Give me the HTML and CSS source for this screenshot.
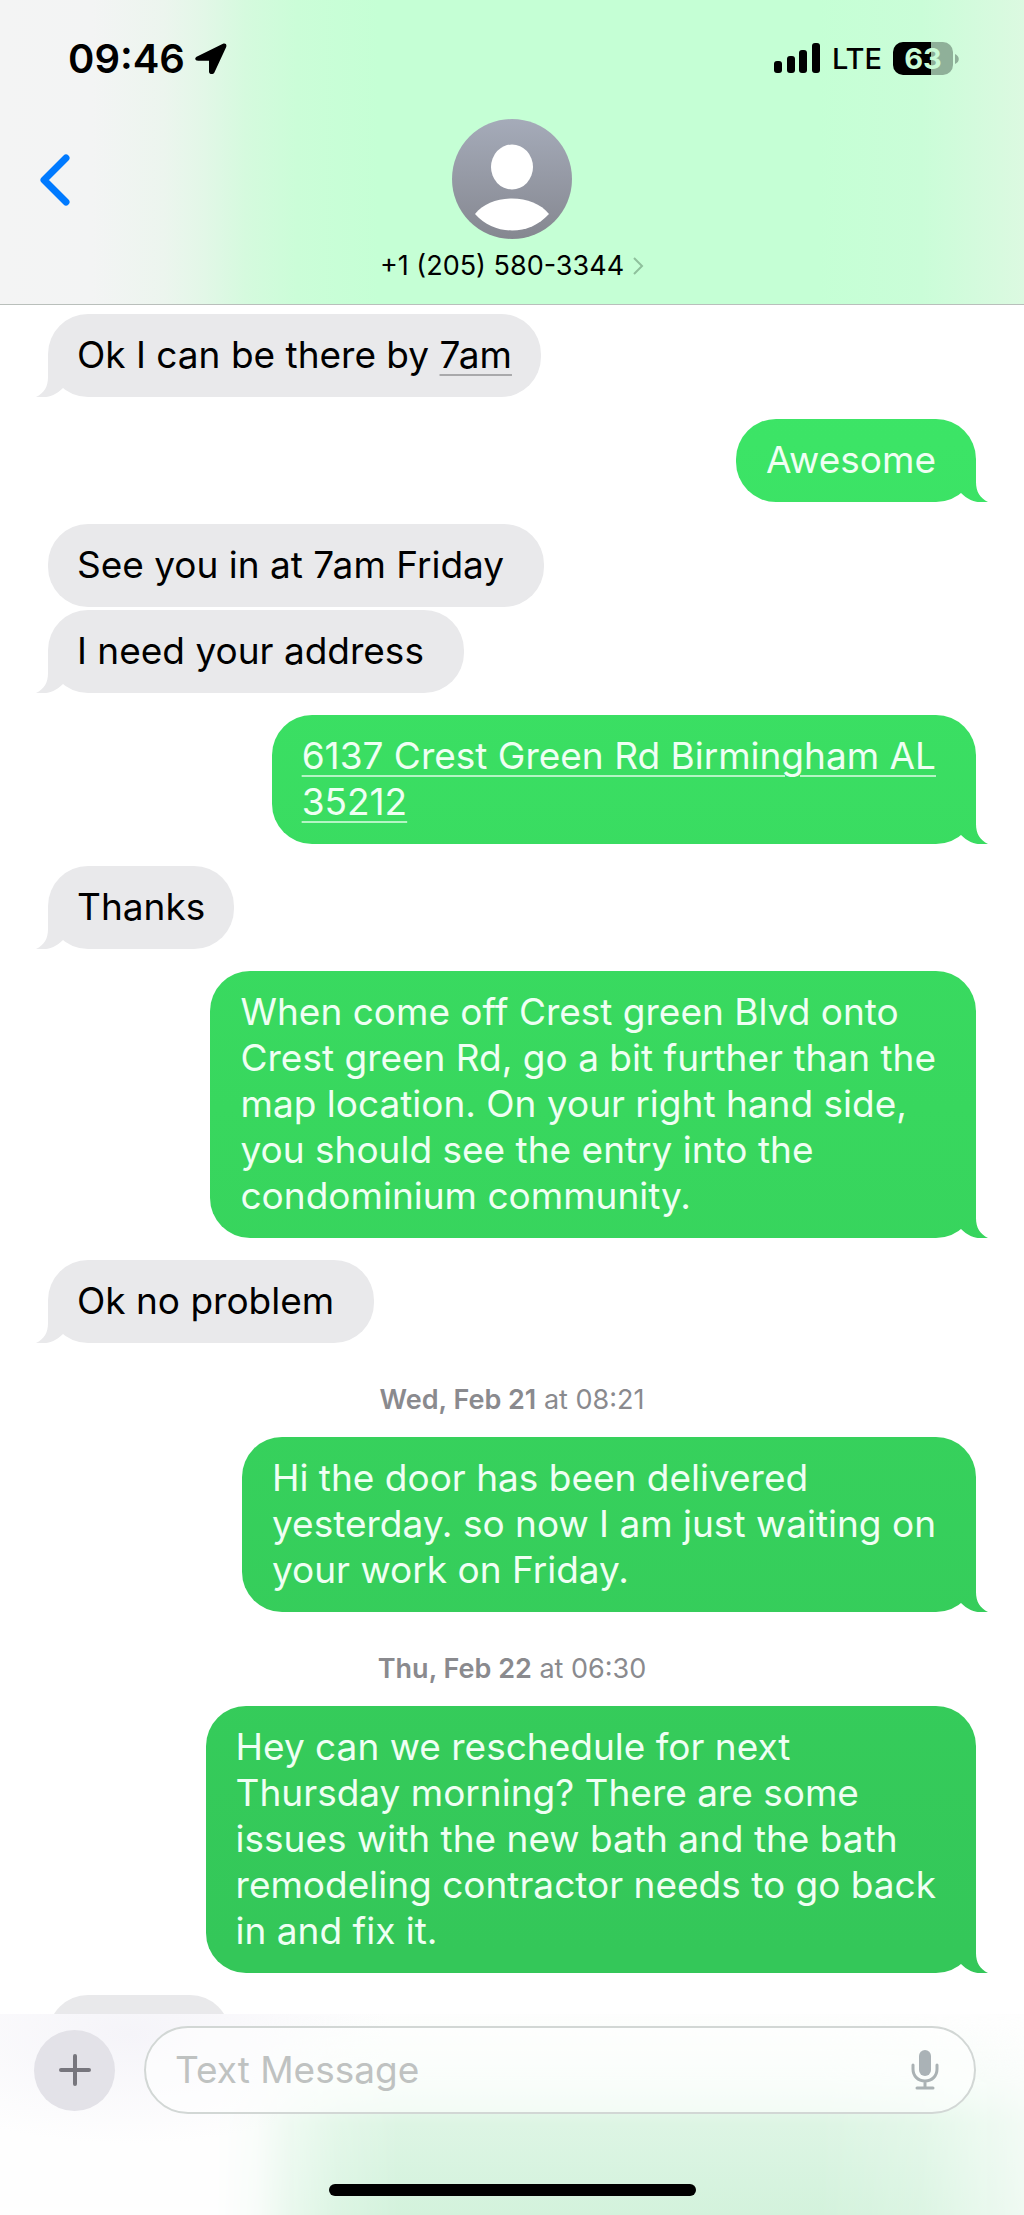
FILE: index.html
```html
<!DOCTYPE html>
<html lang="en">
<head>
<meta charset="utf-8">
<meta name="viewport" content="width=device-width, initial-scale=1">
<title>Messages</title>
<link rel="stylesheet" href="styles.css">
</head>
<body>
<div class="app">
  <header class="header">
    <div class="status">
      <div class="status-left">
        <span class="clock">09:46</span>
        <svg class="icon-location" width="32" height="32" viewBox="0 0 32 32" aria-hidden="true"><path d="M2.6 13.2 28 .8C30.400 0 32 1.500 31.200 4L19.400 29.400C18.200 32 14 31.600 14 28.400V17.800H3.200C-.4 17.600-.8 14.600 2.600 13.200Z"/></svg>
      </div>
      <div class="status-right">
        <svg width="48" height="31" viewBox="0 0 48 31" aria-hidden="true"><rect x="1" y="18" width="8" height="12" rx="3"/><rect x="14" y="13" width="8" height="17" rx="3"/><rect x="26" y="7" width="8" height="23" rx="3"/><rect x="39" y="0" width="8" height="30" rx="3"/></svg>
        <span class="carrier">LTE</span>
        <span class="battery"><span class="battery-level">63</span><svg class="battery-cap" width="4" height="10" viewBox="0 0 4 10" aria-hidden="true"><path d="M0 0C5 2 5 8 0 10Z"/></svg></span>
      </div>
    </div>
    <div class="contact-bar">
      <button class="back" type="button" aria-label="Back">
        <svg width="30" height="52" viewBox="0 0 30 52" aria-hidden="true"><path d="M26 4 4 26 26 48" fill="none" stroke="#007aff" stroke-width="7" stroke-linecap="round" stroke-linejoin="round"/></svg>
      </button>
      <a class="contact" href="#contact">
        <svg width="120" height="120" viewBox="0 0 120 120" aria-hidden="true">
          <defs><linearGradient id="avatar" x1="0" y1="0" x2="0" y2="1"><stop offset="0" stop-color="#a5abb9"/><stop offset="1" stop-color="#858790"/></linearGradient></defs>
          <circle cx="60" cy="60" r="60" fill="url(#avatar)"/>
          <ellipse cx="60" cy="48" rx="21" ry="22.500" fill="#fff"/>
          <path d="M23 95C31 85 45 79.500 60 79.500S89 85 97 95C87 106 74 111.500 60 111.500S33 106 23 95Z" fill="#fff"/>
        </svg>
        <span class="contact-name">+1 (205) 580-3344
          <svg width="12" height="20" viewBox="0 0 12 20" aria-hidden="true"><path d="m2 2 8 8-8 8" fill="none" stroke="#8fc09c" stroke-width="2"/></svg>
        </span>
      </a>
    </div>
  </header>

  <main class="thread">
    <p class="bubble received tail snug">Ok I can be there by <a href="#event">7am</a></p>
    <p class="bubble sent tail">Awesome</p>
    <p class="bubble received">See you in at 7am Friday</p>
    <p class="bubble received tail grouped">I need your address</p>
    <p class="bubble sent tail"><a href="#map">6137 Crest Green Rd Birmingham AL<br>35212</a></p>
    <p class="bubble received tail snug">Thanks</p>
    <p class="bubble sent tail">When come off Crest green Blvd onto<br>Crest green Rd, go a bit further than the<br>map location. On your right hand side,<br>you should see the entry into the<br>condominium community.</p>
    <p class="bubble received tail">Ok no problem</p>
    <p class="stamp"><b>Wed, Feb 21</b> at 08:21</p>
    <p class="bubble sent tail">Hi the door has been delivered<br>yesterday. so now I am just waiting on<br>your work on Friday.</p>
    <p class="stamp"><b>Thu, Feb 22</b> at 06:30</p>
    <p class="bubble sent tail">Hey can we reschedule for next<br>Thursday morning? There are some<br>issues with the new bath and the bath<br>remodeling contractor needs to go back<br>in and fix it.</p>
    <p class="bubble received partial"></p>
  </main>

  <footer class="composer">
    <form class="composer-row">
      <button class="add" type="button" aria-label="Add">
        <svg width="32" height="32" viewBox="0 0 32 32" aria-hidden="true"><path d="M16 2V30M2 16H30" stroke="#77767d" stroke-width="4" stroke-linecap="round"/></svg>
      </button>
      <div class="field">
        <input class="message" type="text" placeholder="Text Message" aria-label="Text Message">
        <button class="mic" type="button" aria-label="Dictate">
          <svg width="28" height="42" viewBox="0 0 28 42" aria-hidden="true"><rect x="8" y="1" width="12" height="26" rx="6" fill="#aab2b6"/><path d="M2 16V20C2 27 7 32 14 32S26 27 26 20V16M14 32V39M6 39H22" fill="none" stroke="#aab2b4" stroke-width="3" stroke-linecap="round"/></svg>
        </button>
      </div>
    </form>
    <div class="home-bar"></div>
  </footer>
</div>
</body>
</html>
```
FILE: styles.css
```css
* {
  box-sizing: border-box;
}

body {
  margin: 0;
  background: #fff;
  color: #000;
  font-family: Inter, "Liberation Sans", sans-serif;
}

button {
  margin: 0;
  padding: 0;
  border: 0;
  background: none;
}

a {
  color: inherit;
}

svg {
  display: block;
  flex: none;
}

.app {
  display: flex;
  flex-direction: column;
  height: 100vh;
}

/* Header */

.header {
  flex: none;
  padding-bottom: 22px;
  border-bottom: 1px solid #b9bfbb;
  background: linear-gradient(90deg, #f4f4f4 0%, #f3f4f4 9%, #ecf5ee 16%, #e2f7e7 20%, #d5fade 24%, #cbfdd8 29%, #c5ffd5 37%, #c5ffd5 80%, #cafdd8 90%, #dcf9e1 100%);
}

.status {
  display: flex;
  justify-content: space-between;
  align-items: center;
  height: 119px;
  padding: 0 65px 2px 68px;
}

.status-left,
.status-right {
  display: flex;
  align-items: center;
}

.status-left {
  gap: 10px;
}

.status-right {
  gap: 11px;
}

.clock {
  font-size: 40px;
  line-height: 48px;
  font-weight: 600;
}

.carrier {
  font-size: 29px;
  line-height: 36px;
  font-weight: 500;
}

.battery {
  display: flex;
  align-items: center;
  gap: 2px;
}

.battery-level {
  width: 60px;
  border-radius: 10px;
  background: linear-gradient(90deg, #000 63%, #8fb099 63%);
  color: #c9fbd6;
  font-size: 29px;
  line-height: 33px;
  font-weight: 700;
  text-align: center;
}

.battery-cap {
  fill: #8fb099;
}

.contact-bar {
  display: grid;
  grid-template-columns: 1fr auto 1fr;
  padding: 0 40px;
}

.back {
  justify-self: start;
  align-self: start;
  padding: 35px 0;
}

.contact {
  display: flex;
  flex-direction: column;
  align-items: center;
  gap: 11px;
  text-decoration: none;
}

.contact-name {
  display: flex;
  align-items: center;
  gap: 8px;
  font-size: 27px;
  line-height: 32px;
}

/* Conversation */

.thread {
  display: flex;
  flex: 1;
  flex-direction: column;
  align-items: flex-start;
  gap: 22px;
  min-height: 0;
  padding: 9px 48px 0;
  overflow: hidden;
}

.bubble {
  position: relative;
  flex: none;
  margin: 0;
  padding: 18px 40px 19px 30px;
  border-radius: 40px;
  font-size: 37px;
  line-height: 46px;
}

.bubble a {
  text-decoration-thickness: 2px;
  text-underline-offset: 6px;
}

.received {
  padding-left: 29px;
  background: #e9e9eb;
}

.received a {
  text-decoration-color: #a9a9ab;
}

.sent {
  align-self: flex-end;
  color: #effff3;
}

.sent a {
  text-decoration-color: #b4f5c4;
}

/* One gradient runs down the whole window behind every sent bubble */
.sent,
.sent::after {
  background: linear-gradient(#3ee868 0%, #3ce466 20%, #38d75e 50%, #34c759 88%, #34c759 100%) fixed;
}

.tail::after {
  content: "";
  position: absolute;
  bottom: 0;
  width: 40px;
  height: 40px;
}

.sent.tail::after {
  right: -12px;
  clip-path: path("M28 0V20C28 30 32 36 40 40C29 42 20 38 13 31V0Z");
}

.received.tail::after {
  left: -12px;
  background: #e9e9eb;
  clip-path: path("M12 0V20C12 30 8 36 0 40C11 42 20 38 27 31V0Z");
}

.snug {
  padding-right: 29px;
}

.grouped {
  margin-top: -19px;
}

.partial {
  width: 182px;
  height: 83px;
}

.stamp {
  flex: none;
  align-self: center;
  margin: 20px 0 0;
  color: #8a8a8e;
  font-size: 27px;
  line-height: 30px;
}

.stamp b {
  font-weight: 600;
}

/* Composer */

.composer {
  position: relative;
  isolation: isolate;
  flex: none;
  padding: 12px 0 19px;
  background: radial-gradient(ellipse 260px 110px at 130px 20px, #f5f4f9, #fefefe);
}

.composer::before {
  content: "";
  position: absolute;
  inset: 0;
  z-index: -1;
  background: linear-gradient(#fff0 0%, #f1fbf4 35%, #ddf5e4 55%, #d3f2dc 100%);
  mask-image: linear-gradient(90deg, transparent 21%, #0002 25%, #0008 29%, #000c 33%, #000 39%, #000 80%, #000c 90%, #0005 100%);
}

.composer-row {
  display: flex;
  align-items: center;
  gap: 29px;
  margin: 0;
  padding: 0 48px 0 34px;
}

.add {
  display: grid;
  place-items: center;
  flex: none;
  width: 81px;
  height: 81px;
  border-radius: 50%;
  background: #e3e2e8;
}

.field {
  display: flex;
  flex: 1;
  align-items: center;
  height: 88px;
  padding: 0 35px 0 29px;
  border: 2px solid #d2d7d5;
  border-radius: 44px;
  background: #ffffff90;
}

.message {
  flex: 1;
  min-width: 0;
  padding: 0;
  border: 0;
  outline: 0;
  background: none;
  font: 37px/46px Inter, "Liberation Sans", sans-serif;
}

.message::placeholder {
  color: #bfc2c1;
  opacity: 1;
}

.home-bar {
  width: 367px;
  height: 12px;
  margin: 70px auto 0;
  border-radius: 6px;
  background: #000;
}
```
